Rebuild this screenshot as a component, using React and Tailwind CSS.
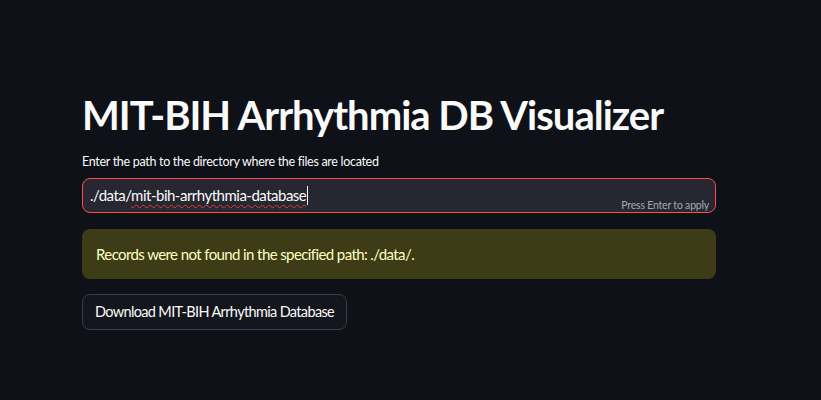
export default function App() {
  return (
    <div className="min-h-[400px] w-full bg-[#0e1117] text-[#fafafa]" style={{ fontFamily: 'Lato, "Noto Sans", sans-serif' }}>
      <div className="pl-[82px] pr-[105px] pt-[88px]">
        <h1 className="whitespace-nowrap text-[40px] font-bold leading-[54px] tracking-[-1px] text-[#fafafa]">MIT-BIH Arrhythmia DB Visualizer</h1>
        <div className="mt-[11px] text-[12.5px] leading-[18px] tracking-[-0.3px] text-[#fafafa]">Enter the path to the directory where the files are located</div>
        <div className="relative mt-[7px] flex h-[35px] items-center rounded-[8px] border border-[#ff4b4b] bg-[#262730] px-[7px]">
          <span className="text-[15px] tracking-[-0.5px] text-[#fafafa]">
            ./data/<span className="underline decoration-wavy decoration-[#e03c3c] decoration-1 underline-offset-[3px]">mit-bih-arrhythmia-database</span>
          </span>
          <span className="ml-[1px] inline-block h-[19px] w-[1px] bg-[#fafafa]"></span>
          <span className="absolute bottom-[-2px] right-[6px] text-[10.5px] tracking-[-0.2px] text-[#a3a8b8]">Press Enter to apply</span>
        </div>
        <div className="mt-[16px] flex h-[50px] items-center rounded-[8px] bg-[#3e3c16] px-[14px] text-[15px] tracking-[-0.6px] text-[#ffffc2]">
          Records were not found in the specified path: ./data/.
        </div>
        <button className="mt-[15px] h-[36px] rounded-[8px] border border-[#3a3d45] bg-[#13161d] px-[12px] text-[14.5px] tracking-[-0.65px] text-[#fafafa]">
          Download MIT-BIH Arrhythmia Database
        </button>
      </div>
    </div>
  );
}
